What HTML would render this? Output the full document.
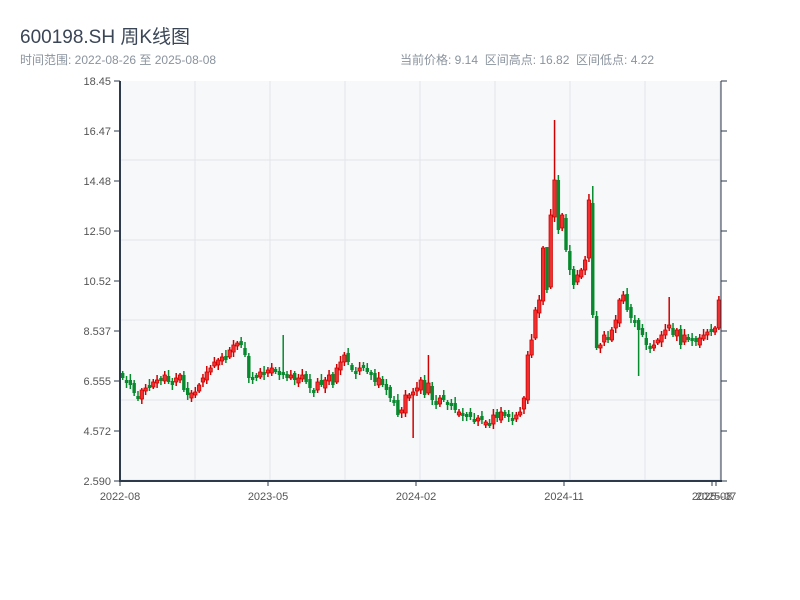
<!DOCTYPE html>
<html><head><meta charset="utf-8"><style>
html,body{margin:0;padding:0;background:#fff;width:800px;height:600px;overflow:hidden}
body{font-family:"Liberation Sans","Noto Sans CJK SC",sans-serif;position:relative}
.t{position:absolute;left:20px;top:22px;font-size:19px;color:#3a4556}
.s{position:absolute;top:51px;font-size:12px;color:#8a939e}
</style></head><body>
<div class="t">600198.SH 周K线图</div>
<div class="s" style="left:20px">时间范围: 2022-08-26 至 2025-08-08</div>
<div class="s" style="left:400px">当前价格: 9.14&nbsp;&nbsp;区间高点: 16.82&nbsp;&nbsp;区间低点: 4.22</div>
<svg id="c" width="800" height="600" style="position:absolute;left:0;top:0" font-family="Liberation Sans, sans-serif" font-size="11" fill="#555"></svg>
<script>
var s=document.getElementById('c'),h='';
h+='<rect x="120" y="81" width="601" height="400" fill="#f7f8fa"/>';
for(var y=160;y<481;y+=80)h+='<line x1="120" x2="721" y1="'+y+'" y2="'+y+'" stroke="#e2e4e8"/>';
for(var x=195;x<721;x+=75)h+='<line y1="81" y2="481" x1="'+x+'" x2="'+x+'" stroke="#e2e4e8"/>';
var c=[378,380,385,393,398,390,388,385,382,380,378,375,382,385,378,375,390,395,393,392,385,378,372,368,362,360,357,360,350,345,343,345,355,378,378,375,372,375,370,368,372,375,372,378,375,380,378,375,382,388,390,382,385,380,375,385,368,362,355,362,370,372,368,366,372,375,382,378,385,390,398,400,415,410,395,395,392,388,380,395,383,400,405,398,400,403,405,410,412,415,415,417,420,418,420,422,425,415,418,412,416,415,418,415,412,398,355,340,310,300,248,290,215,180,230,215,250,270,285,275,270,260,200,315,348,345,335,340,330,320,300,295,310,318,320,330,335,345,348,345,340,335,330,325,335,330,345,335,338,340,342,338,335,332,330,328,300];
var n=c.length,dx=600/n,p=376;
for(var i=0;i<n;i++){var o=p+((i*5)%7-3),cl=c[i],x=121+i*dx,t=Math.min(o,cl),b=Math.max(o,cl);if(b-t<3)b=t+3;
var hi=t-2-(i*7%5),lo=b+2+(i*3%4);if(i==113)hi=120;if(i==123)hi=186;if(i==42)hi=335;if(i==80)hi=355;if(i==76)lo=438;if(i==143)hi=297;if(i==135)lo=376;if(i==111)hi=285;
var up=cl<o,col=up?'#d10000':'#078a2e';
h+='<line x1="'+(x+1.7)+'" x2="'+(x+1.7)+'" y1="'+hi+'" y2="'+lo+'" stroke="'+col+'" stroke-width="1.5"/>';
h+='<rect x="'+x+'" y="'+t+'" width="3.4" height="'+(b-t)+'" fill="'+(up?'#f03030':col)+'" stroke="'+col+'" stroke-width="'+(up?0.8:0)+'"/>';p=cl;}
h+='<line x1="120" x2="120" y1="81" y2="482" stroke="#2d3a4b" stroke-width="2"/><line x1="119" x2="722" y1="481" y2="481" stroke="#2d3a4b" stroke-width="2"/><line x1="721" x2="721" y1="81" y2="481" stroke="#2d3a4b"/>';
var L=['18.45','16.47','14.48','12.50','10.52','8.537','6.555','4.572','2.590'];
for(var k=0;k<9;k++){var yy=81+k*50;h+='<line x1="114" x2="120" y1="'+yy+'" y2="'+yy+'" stroke="#2d3a4b"/><line x1="721" x2="727" y1="'+yy+'" y2="'+yy+'" stroke="#2d3a4b"/><text x="111" y="'+(yy+4)+'" text-anchor="end">'+L[k]+'</text>';}
var X=[[120,'2022-08'],[268,'2023-05'],[416,'2024-02'],[564,'2024-11'],[712,'2025-08'],[716,'2025-07']];
for(k=0;k<X.length;k++){h+='<line x1="'+X[k][0]+'" x2="'+X[k][0]+'" y1="481" y2="486" stroke="#2d3a4b"/><text x="'+X[k][0]+'" y="500" text-anchor="middle">'+X[k][1]+'</text>';}
s.innerHTML=h;
</script>
</body></html>
